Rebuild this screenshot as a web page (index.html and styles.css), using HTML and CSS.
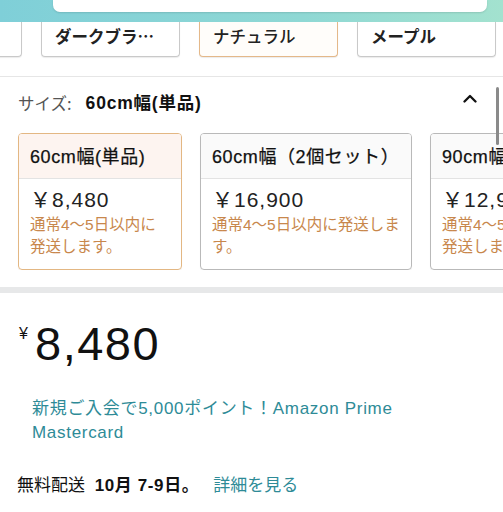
FILE: index.html
```html
<!DOCTYPE html>
<html lang="ja">
<head>
<meta charset="utf-8">
<link rel="stylesheet" href="styles.css">
</head>
<body>
<div class="banner"><div class="banner-box"></div></div>
<div class="swatches">
  <div class="swatch">ブラック</div>
  <div class="swatch">ダークブラ…</div>
  <div class="swatch selected">ナチュラル</div>
  <div class="swatch">メープル</div>
</div>
<section class="size">
  <div class="size-head">
    <span class="size-label">サイズ:</span>
    <span class="size-value">60cm幅(単品)</span>
    <svg class="chevron" width="14" height="9" viewBox="0 0 14 9"><path d="M1.5 7.5 L7 2 L12.5 7.5" fill="none" stroke="#111" stroke-width="2.3" stroke-linecap="round" stroke-linejoin="round"/></svg>
  </div>
  <div class="scrollbar"></div>
  <div class="cards">
    <div class="card selected w1">
      <div class="card-head">60cm幅(単品)</div>
      <div class="card-body">
        <div class="card-price">￥8,480</div>
        <div class="card-note">通常4～5日以内に<br>発送します。</div>
      </div>
    </div>
    <div class="card w2">
      <div class="card-head">60cm幅（2個セット）</div>
      <div class="card-body">
        <div class="card-price">￥16,900</div>
        <div class="card-note">通常4～5日以内に発送しま<br>す。</div>
      </div>
    </div>
    <div class="card w1">
      <div class="card-head">90cm幅(単品)</div>
      <div class="card-body">
        <div class="card-price">￥12,980</div>
        <div class="card-note">通常4～5日以内に<br>発送します。</div>
      </div>
    </div>
  </div>
</section>
<div class="band"></div>
<section class="buy">
  <div class="price"><span class="yen">¥</span>8,480</div>
  <div class="promo">新規ご入会で5,000ポイント！Amazon Prime<br>Mastercard</div>
  <div class="ship">無料配送 <b>10月 7-9日。</b><span class="link">詳細を見る</span></div>
</section>
</body>
</html>
```

FILE: styles.css
```css
* { box-sizing: border-box; }
html, body { margin: 0; padding: 0; background: #fff; }
body {
  width: 503px;
  height: 512px;
  overflow: hidden;
  font-family: "Liberation Sans", "Noto Sans CJK JP", sans-serif;
  color: #111;
}
.banner {
  height: 22px;
  background: linear-gradient(90deg, #7fcfd8 0%, #8fd8d4 60%, #a3e2cf 100%);
  padding-left: 53px;
}
.banner-box {
  width: 434px;
  height: 12px;
  background: #fff;
  border-radius: 0 0 7px 7px;
  box-shadow: 0 1px 2px rgba(0,0,0,0.12);
}
.swatches {
  display: flex;
  gap: 19px;
  margin-left: -117px;
  height: 55px;
  border-bottom: 1px solid #e6e6e6;
  overflow: hidden;
}
.swatch {
  flex: 0 0 139px;
  height: 35px;
  border: 1px solid #c9c9c9;
  border-top: none;
  border-radius: 0 0 4px 4px;
  padding: 2px 0 0 13px;
  font-family: "Noto Sans CJK JP", sans-serif;
  font-weight: 700;
  font-size: 16.5px;
  line-height: 24px;
  color: #222;
  box-shadow: 0 1px 1px rgba(0,0,0,0.08);
}
.swatch.selected {
  border-color: #e4b889;
  background: #fffdfa;
  font-weight: 500;
}
.size {
  position: relative;
  padding-top: 14px;
}
.size-head {
  display: flex;
  align-items: center;
  height: 24px;
  padding-left: 18px;
  line-height: 24px;
}
.size-label {
  color: #555;
  font-family: "Noto Sans CJK JP", sans-serif;
  font-size: 16.5px;
  margin-right: 14px;
}
.size-value {
  font-weight: 700;
  font-size: 17.5px;
  letter-spacing: 0.8px;
  color: #111;
}
.chevron {
  margin-left: auto;
  margin-right: 26px;
  margin-top: -9px;
}
.scrollbar {
  position: absolute;
  left: 496px;
  top: 10px;
  width: 3px;
  height: 58px;
  border-radius: 2px;
  background: #8a8a8a;
}
.cards {
  display: flex;
  gap: 18px;
  margin-top: 18px;
  padding-left: 18px;
  overflow: hidden;
}
.card {
  flex: 0 0 auto;
  height: 137px;
  border: 1px solid #b9b9b9;
  border-radius: 4px;
  overflow: hidden;
  box-shadow: 0 1px 1px rgba(0,0,0,0.06);
}
.card.w1 { width: 164px; }
.card.w2 { width: 212px; }
.card.selected { border-color: #e3b783; }
.card-head {
  height: 45px;
  padding: 11px 0 0 11px;
  font-size: 18px;
  line-height: 24px;
  letter-spacing: 0.6px;
  -webkit-text-stroke: 0.25px #111;
  white-space: nowrap;
  background: #fafafa;
  border-bottom: 1px solid #e3e3e3;
  color: #111;
}
.card.selected .card-head { background: #fdf4f0; }
.card-body { padding: 9px 0 0 11px; }
.card-price {
  font-size: 21px;
  line-height: 24px;
  letter-spacing: 1px;
  color: #222;
  white-space: nowrap;
}
.card-note {
  margin-top: 2px;
  font-size: 15.5px;
  line-height: 22px;
  color: #c8874c;
  white-space: nowrap;
}
.band {
  height: 6px;
  margin-top: 17px;
  background: #e7e8e9;
}
.buy { padding: 24px 0 0 0; }
.price {
  font-size: 47px;
  line-height: 54px;
  letter-spacing: 1.5px;
  padding-left: 35px;
  position: relative;
  color: #111;
}
.yen {
  position: absolute;
  left: 19px;
  top: 9px;
  font-size: 16px;
  line-height: 16px;
  letter-spacing: 0;
}
.promo {
  margin-top: 26px;
  padding-left: 32px;
  font-size: 17px;
  letter-spacing: 0.7px;
  line-height: 24px;
  color: #2e8b97;
}
.ship {
  margin-top: 29px;
  padding-left: 17px;
  font-size: 17px;
  line-height: 24px;
  color: #111;
}
.ship b { font-weight: 700; margin-left: 5px; letter-spacing: 0.6px; }
.ship .link { color: #2e8b97; margin-left: 14px; }
```
